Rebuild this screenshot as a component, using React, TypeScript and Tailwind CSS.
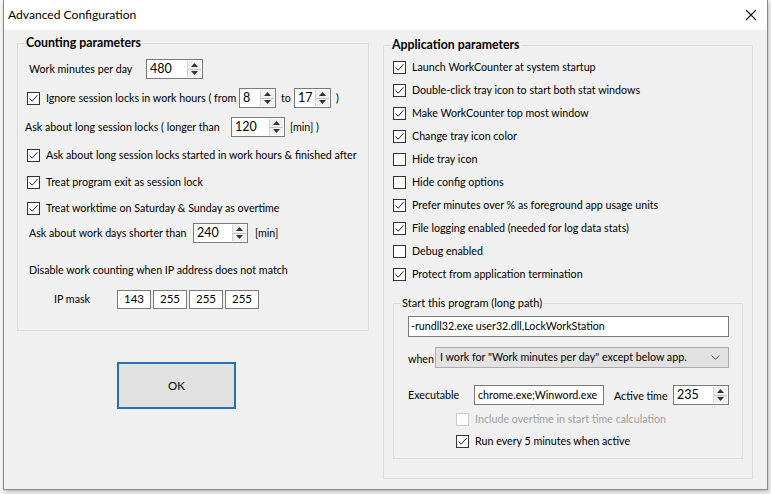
import type { ReactNode } from 'react';

const font = { fontFamily: 'Lato, "Liberation Sans", Arial, sans-serif' };

function Check({ checked = false, disabled = false }: { checked?: boolean; disabled?: boolean }) {
  return (
    <span
      className={`flex h-[13px] w-[13px] shrink-0 items-center justify-center border bg-white ${
        disabled ? 'border-[#cccccc]' : 'border-[#333333]'
      }`}
    >
      {checked && (
        <svg viewBox="0 0 11 11" className="h-[11px] w-[11px]">
          <path d="M1.5 5.5 L4.2 8.2 L9.5 2.2" fill="none" stroke="#222" strokeWidth="1" />
        </svg>
      )}
    </span>
  );
}

function Arrows() {
  return (
    <div className="flex w-[14px] shrink-0 flex-col border-l border-[#d4d4d4] bg-[#f0f0f0]">
      <div className="flex flex-1 items-center justify-center border-b border-[#c4c4c4]">
        <svg viewBox="0 0 7 4" className="h-[4px] w-[7px]">
          <path d="M0 4 L3.5 0 L7 4 Z" fill="#333" />
        </svg>
      </div>
      <div className="flex flex-1 items-center justify-center">
        <svg viewBox="0 0 7 4" className="h-[4px] w-[7px]">
          <path d="M0 0 L3.5 4 L7 0 Z" fill="#333" />
        </svg>
      </div>
    </div>
  );
}

function Spin({ value, className }: { value: string; className: string }) {
  return (
    <div className={`flex h-[20px] shrink-0 border border-[#7a7a7a] bg-white p-[1px] ${className}`}>
      <span className="flex-1 pl-[2px] text-[12.5px] leading-[15px]">{value}</span>
      <Arrows />
    </div>
  );
}

function Box({ children, className }: { children: ReactNode; className: string }) {
  return (
    <div className={`flex shrink-0 items-center border border-[#7a7a7a] bg-white ${className}`}>{children}</div>
  );
}

function CheckRow({ label, checked, className = '' }: { label: string; checked?: boolean; className?: string }) {
  return (
    <div className={`flex items-center gap-[6px] ${className}`}>
      <Check checked={checked} />
      <span className="whitespace-nowrap">{label}</span>
    </div>
  );
}

function Group({ title, bold, className, children }: { title: string; bold?: boolean; className: string; children: ReactNode }) {
  return (
    <div className={`relative shrink-0 border border-[#dcdcdc] ${className}`}>
      <span
        className={`absolute -top-[9px] left-[7px] bg-[#f0f0f0] px-[1px] leading-[16px] text-black ${
          bold ? 'text-[12.3px] font-bold' : 'text-[11px]'
        }`}
      >
        {title}
      </span>
      {children}
    </div>
  );
}

const appOptions: [string, boolean][] = [
  ['Launch WorkCounter at system startup', true],
  ['Double-click tray icon to start both stat windows', true],
  ['Make WorkCounter top most window', true],
  ['Change tray icon color', true],
  ['Hide tray icon', false],
  ['Hide config options', false],
  ['Prefer minutes over % as foreground app usage units', true],
  ['File logging enabled (needed for log data stats)', true],
  ['Debug enabled', false],
  ['Protect from application termination', true],
];

export default function App() {
  return (
    <div className="h-[494px] w-[771px] overflow-hidden bg-[#f7f7f7] text-[10.7px] text-black" style={font}>
      <div className="ml-[3px] flex h-[490px] w-[765px] flex-col border border-t-0 border-[#8a8a8a] bg-[#f0f0f0] shadow-[1px_2px_4px_rgba(0,0,0,0.25)]">
        {/* title bar */}
        <div className="flex h-[30px] shrink-0 items-center justify-between bg-white pl-[4px] pr-[8px]">
          <span className="text-[12.1px]">Advanced Configuration</span>
          <svg viewBox="0 0 12 12" className="mr-[2px] h-[12px] w-[12px]">
            <path d="M1 1 L11 11 M11 1 L1 11" stroke="#111" strokeWidth="1.1" />
          </svg>
        </div>

        <div className="flex flex-1 pl-[13px]">
          {/* left column */}
          <div className="flex flex-col">
            <Group title="Counting parameters" bold className="mt-[13px] h-[288px] w-[352px]">
              <div className="flex h-[20px] items-center pl-[11px] mt-[15px]">
                <span className="w-[117px] whitespace-nowrap">Work minutes per day</span>
                <Spin value="480" className="w-[57px]" />
              </div>

              <div className="mt-[9px] flex h-[20px] items-center pl-[9px]">
                <Check checked />
                <span className="ml-[6px] w-[193px] whitespace-nowrap">Ignore session locks in work hours ( from</span>
                <Spin value="8" className="w-[37px]" />
                <span className="w-[18px] pl-[5px]">to</span>
                <Spin value="17" className="w-[37px]" />
                <span className="ml-[5px]">)</span>
              </div>

              <div className="mt-[9px] flex h-[20px] items-center pl-[7px]">
                <span className="w-[206px] whitespace-nowrap">Ask about long session locks ( longer than</span>
                <Spin value="120" className="w-[54px]" />
                <span className="ml-[5px]">[min] )</span>
              </div>

              <CheckRow className="mt-[8px] h-[20px] pl-[9px]" checked label="Ask about long session locks started in work hours & finished after" />
              <CheckRow className="mt-[7px] h-[20px] pl-[9px]" checked label="Treat program exit as session lock" />
              <CheckRow className="mt-[6px] h-[20px] pl-[9px]" checked label="Treat worktime on Saturday & Sunday as overtime" />

              <div className="mt-[5px] flex h-[20px] items-center pl-[11px]">
                <span className="w-[164px] whitespace-nowrap">Ask about work days shorter than</span>
                <Spin value="240" className="w-[55px]" />
                <span className="ml-[7px]">[min]</span>
              </div>

              <div className="mt-[17px] flex h-[20px] items-center pl-[11px]">
                <span className="whitespace-nowrap">Disable work counting when IP address does not match</span>
              </div>

              <div className="mt-[9px] flex h-[20px] items-center pl-[36px]">
                <span className="w-[63px]">IP mask</span>
                <div className="flex gap-[2px]">
                  {['143', '255', '255', '255'].map((v, i) => (
                    <Box key={i} className="h-[19px] w-[34px] justify-center text-[11.5px]">
                      {v}
                    </Box>
                  ))}
                </div>
              </div>
            </Group>

            <button className="ml-[100px] mt-[31px] flex h-[47px] w-[119px] items-center justify-center border-2 border-[#2a70ad] bg-[#e1e1e1] text-[11.5px] shadow-[inset_0_0_0_1px_#cfe6f7]">
              OK
            </button>
          </div>

          {/* right column */}
          <Group title="Application parameters" bold className="ml-[14px] mt-[15px] h-[434px] w-[370px]">
            <div className="mt-[10px] flex flex-col pl-[9px]">
              {appOptions.map(([label, checked]) => (
                <CheckRow key={label} className="h-[23px]" checked={checked} label={label} />
              ))}
            </div>

            <Group title="Start this program (long path)" className="ml-[9px] mt-[17px] h-[156px] w-[350px]">
              <div className="flex flex-col pl-[14px]">
                <Box className="mt-[12px] h-[21px] w-[321px] pl-[2px]">
                  <span className="whitespace-nowrap">-rundll32.exe user32.dll,LockWorkStation</span>
                </Box>

                <div className="mt-[10px] flex h-[21px] items-center">
                  <span className="w-[27px] pt-[4px]">when</span>
                  <div className="flex h-[21px] w-[294px] items-center justify-between border border-[#adadad] bg-[#e1e1e1] pl-[4px] pr-[8px]">
                    <span className="whitespace-nowrap">I work for "Work minutes per day" except below app.</span>
                    <svg viewBox="0 0 9 5" className="h-[5px] w-[9px]">
                      <path d="M0.5 0.5 L4.5 4.5 L8.5 0.5" fill="none" stroke="#555" strokeWidth="1" />
                    </svg>
                  </div>
                </div>

                <div className="mt-[17px] flex h-[20px] items-center">
                  <span className="w-[66px]">Executable</span>
                  <Box className="h-[20px] w-[130px] pl-[3px]">
                    <span className="whitespace-nowrap">chrome.exe;Winword.exe</span>
                  </Box>
                  <span className="ml-[10px] w-[59px] whitespace-nowrap pt-[2px]">Active time</span>
                  <Spin value="235" className="w-[56px]" />
                </div>

                <div className="mt-[3px] flex h-[22px] items-center gap-[6px] pl-[48px]">
                  <Check disabled />
                  <span className="whitespace-nowrap text-[#a0a0a0]">Include overtime in start time calculation</span>
                </div>
                <CheckRow className="h-[22px] pl-[48px]" checked label="Run every 5 minutes when active" />
              </div>
            </Group>
          </Group>
        </div>
      </div>
    </div>
  );
}
